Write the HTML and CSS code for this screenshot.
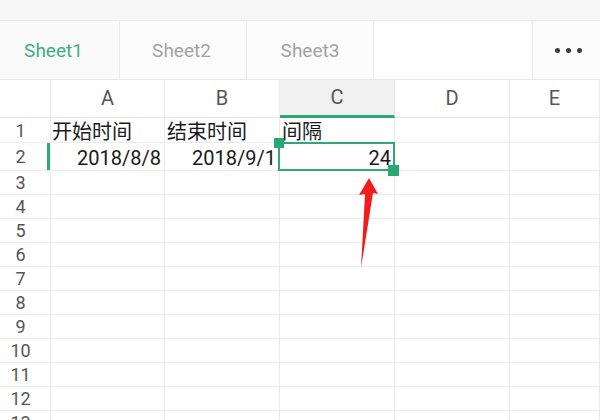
FILE: index.html
```html
<!DOCTYPE html>
<html>
<head>
<meta charset="utf-8">
<link rel="stylesheet" href="styles.css">
</head>
<body>
<div class="app">
  <div class="topbar"></div>
  <div class="tabs">
    <div class="tab active">Sheet1</div>
    <div class="tab t2">Sheet2</div>
    <div class="tab t3">Sheet3</div>
    <div class="tab blank"></div>
    <div class="tab more"><span class="dot"></span><span class="dot"></span><span class="dot"></span></div>
  </div>
  <div class="sheet">
    <div class="grid">
      <div class="corner"></div>
      <div class="colh">A</div>
      <div class="colh">B</div>
      <div class="colh sel">C</div>
      <div class="colh">D</div>
      <div class="colh">E</div>

      <div class="rowh r1">1</div>
      <div class="cell r1 left">开始时间</div>
      <div class="cell r1 left">结束时间</div>
      <div class="cell r1 left">间隔</div>
      <div class="cell r1"></div>
      <div class="cell r1"></div>

      <div class="rowh r2 cur">2</div>
      <div class="cell r2 num">2018/8/8</div>
      <div class="cell r2 num">2018/9/1</div>
      <div class="cell r2 num">24</div>
      <div class="cell r2"></div>
      <div class="cell r2"></div>
    </div>
    <div class="grid rest" id="rest"></div>
    <div class="selection">
      <span class="handle tl"></span>
      <span class="handle br"></span>
    </div>
    <svg class="arrow" width="600" height="420" viewBox="0 0 600 420">
      <polygon points="369,178 378,194 373,193 361,268 365,194 359,195" fill="#f21c1c"/>
    </svg>
  </div>
</div>
<script>
  var rest = document.getElementById('rest');
  for (var r = 3; r <= 13; r++) {
    var h = document.createElement('div');
    h.className = 'rowh';
    h.textContent = r;
    rest.appendChild(h);
    for (var c = 0; c < 5; c++) {
      var d = document.createElement('div');
      d.className = 'cell';
      rest.appendChild(d);
    }
  }
</script>
</body>
</html>
```

FILE: styles.css
```css
* { box-sizing: border-box; }
html, body { margin: 0; padding: 0; background: #fff; }
body { width: 600px; height: 420px; overflow: hidden; font-family: Roboto, "Noto Sans CJK SC", sans-serif; }
.app { width: 600px; height: 420px; display: flex; flex-direction: column; }
.topbar { height: 21px; background: #f6f6f6; border-bottom: 1px solid #ececec; flex: none; }
.tabs { height: 59px; display: flex; background: #fcfcfc; border-bottom: 1px solid #e6e6e6; flex: none; }
.tab { display: flex; align-items: center; justify-content: center; font-size: 19px; color: #a3a3a3; border-right: 1px solid #ececec; }
.tab.active { width: 120px; color: #3fae84; background: #fafafa; padding-right: 12px; }
.tab.t2 { width: 127px; padding-right: 3px; }
.tab.t3 { width: 127px; }
.tab.blank { width: 159px; background: #fff; }
.tab.more { flex: 1; border-right: none; gap: 6px; padding-left: 4px; }
.dot { width: 5px; height: 5px; border-radius: 50%; background: #3c3c3c; }
.sheet { position: relative; flex: 1; overflow: hidden; }
.grid { display: grid; grid-template-columns: 51px 114px 115px 115px 115px 1fr; }
.rest { grid-auto-rows: 24px; }
.corner, .colh { height: 38px; border-right: 1px solid #ebebeb; border-bottom: 1px solid #e6e6e6; }
.colh { display: flex; align-items: center; justify-content: center; font-size: 20px; color: #555; padding-bottom: 2px; }
.colh.sel { background: #f1f1f1; border-bottom: 3px solid #2ea876; border-right-color: #e4e4e4; }
.rowh, .cell { border-right: 1px solid #ebebeb; border-bottom: 1px solid #ebebeb; }
.rowh { display: flex; align-items: center; justify-content: center; padding-right: 9px; font-size: 18px; color: #555; }
.r1 { height: 25px; }
.r2 { height: 28px; }
.cell { display: flex; align-items: center; font-size: 20px; color: #1a1a1a; padding: 0 2px; white-space: nowrap; }
.cell.left { justify-content: flex-start; }
.cell.r1.left:nth-child(8) { padding-left: 1px; }
.cell.num { justify-content: flex-end; padding-right: 3px; padding-top: 2px; }
.rowh.cur { box-shadow: inset -3px 0 0 #2ea876; }
.selection { position: absolute; left: 278px; top: 62px; width: 117px; height: 29px; border: 2px solid #2ea876; }
.handle { position: absolute; width: 10px; height: 10px; background: #2aa874; }
.handle.tl { left: -6px; top: -6px; }
.handle.br { right: -6px; bottom: -7px; width: 11px; height: 11px; }
.arrow { position: absolute; left: 0; top: -80px; pointer-events: none; }
```
